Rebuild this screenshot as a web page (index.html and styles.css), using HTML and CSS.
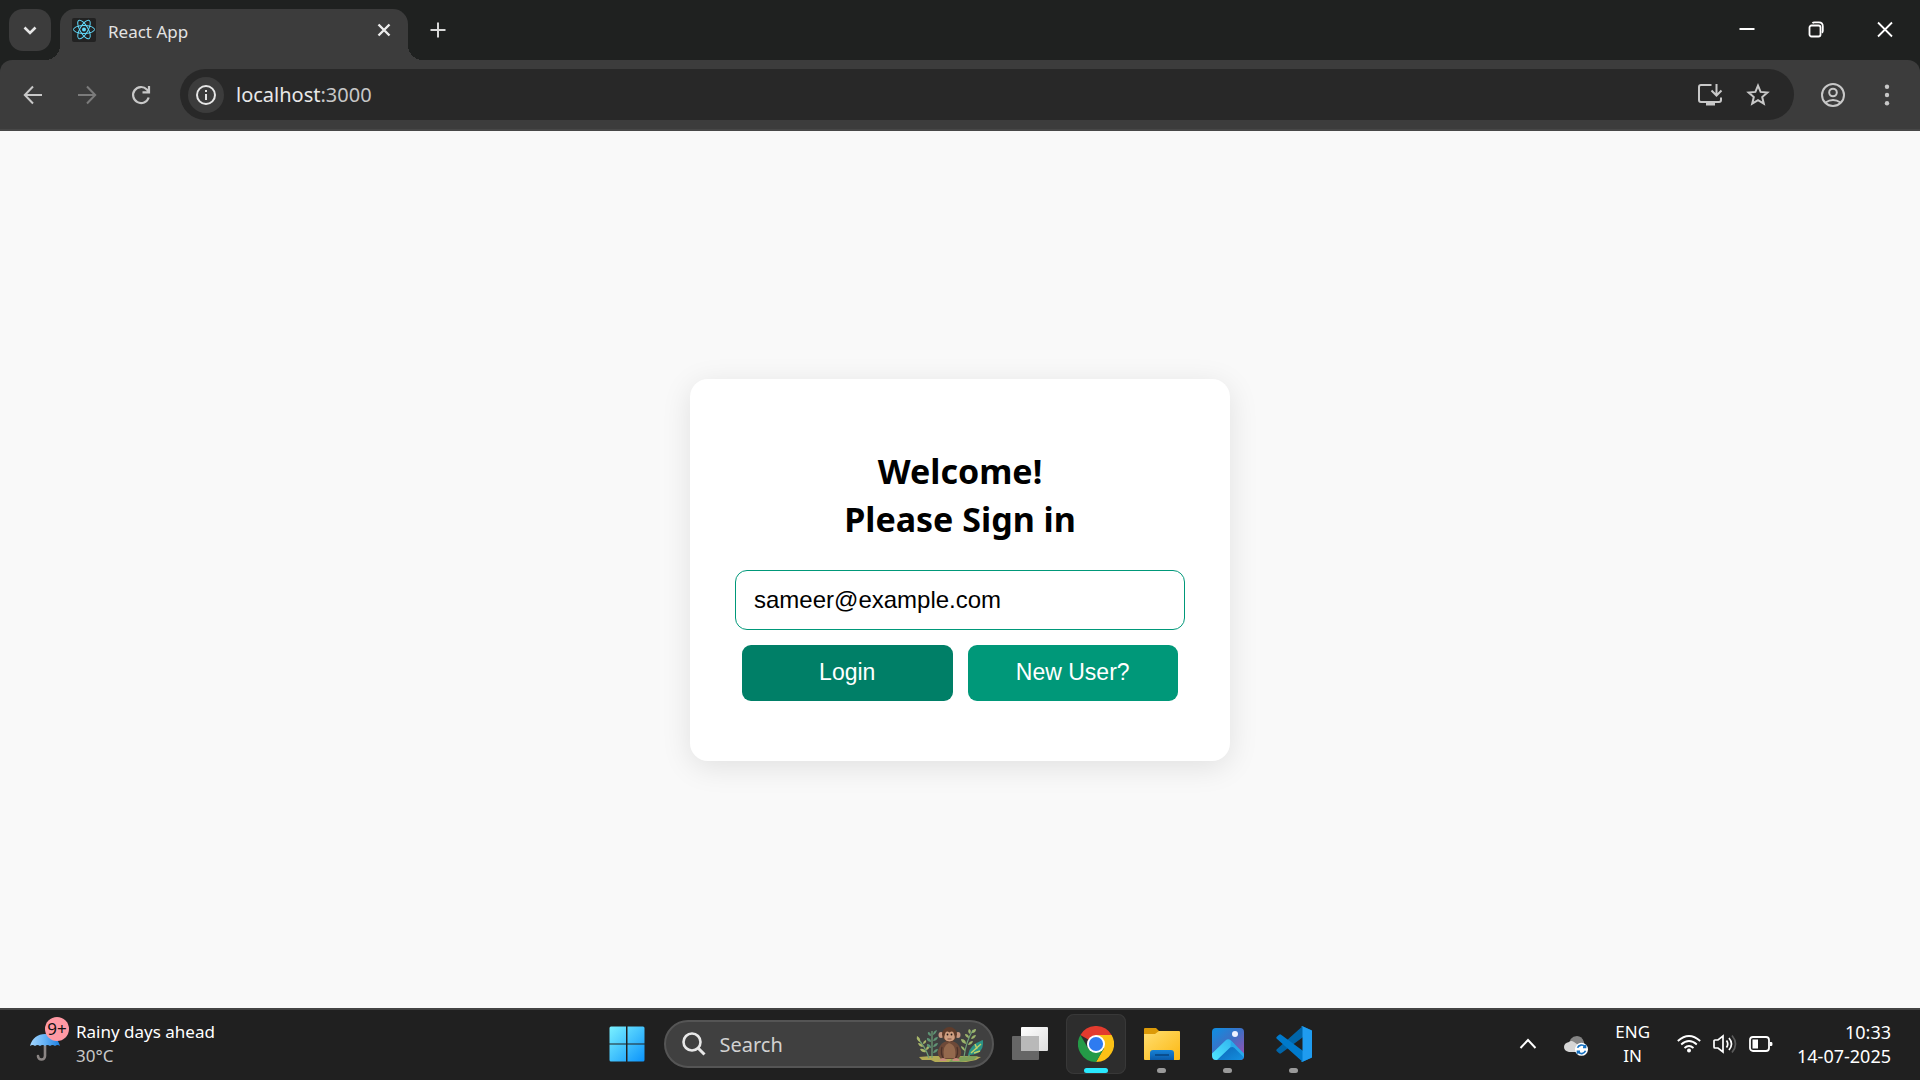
FILE: index.html
```html
<!DOCTYPE html>
<html lang="en">
<head>
<meta charset="utf-8">
<title>React App</title>
<link rel="stylesheet" href="styles.css">
</head>
<body>
<header class="browser">
  <div class="tabstrip">
    <button class="tab-search" aria-label="Search tabs"><svg width="42" height="42" viewBox="0 0 42 42"><path d="M15.500 18.500l5.500 5.500 5.500-5.500" fill="none" stroke="#e6e6e6" stroke-width="2.600"/></svg></button>
    <div class="tab">
      <svg class="favicon" width="24" height="24" viewBox="0 0 24 24"><rect width="24" height="24" rx="2" fill="#222"/><g fill="none" stroke="#61dafb" stroke-width="1"><ellipse cx="12" cy="11.500" rx="10.500" ry="4"/><ellipse cx="12" cy="11.500" rx="10.500" ry="4" transform="rotate(60 12 11.500)"/><ellipse cx="12" cy="11.500" rx="10.500" ry="4" transform="rotate(120 12 11.500)"/></g><circle cx="12" cy="11.500" r="2" fill="#61dafb"/></svg>
      <span class="tab-title">React App</span>
      <button class="icon-button" aria-label="Close tab"><svg width="24" height="24" viewBox="0 0 24 24"><path d="M6.500 6.500l11 11M17.500 6.500l-11 11" stroke="#ececec" stroke-width="2.400"/></svg></button>
    </div>
    <button class="new-tab" aria-label="New tab"><svg width="24" height="24" viewBox="0 0 24 24"><path d="M12 4.500v15M4.500 12h15" stroke="#d8d8d8" stroke-width="2"/></svg></button>
    <div class="window-controls">
      <button class="window-button" aria-label="Minimize"><svg width="24" height="24" viewBox="0 0 24 24"><path d="M4.500 11h15" stroke="#fff" stroke-width="2"/></svg></button>
      <button class="window-button" aria-label="Restore"><svg width="24" height="24" viewBox="0 0 24 24" fill="none" stroke="#fff" stroke-width="1.800"><rect x="5.500" y="7.500" width="11" height="11" rx="2"/><path d="M8.500 5.300q.6-.9 2-.9H15q3.800 0 3.800 3.800v4.600q0 1.200-.9 1.900"/></svg></button>
      <button class="window-button" aria-label="Close"><svg width="24" height="24" viewBox="0 0 24 24"><path d="M5 4.500l14 14M19 4.500l-14 14" stroke="#fff" stroke-width="1.800"/></svg></button>
    </div>
  </div>
  <div class="toolbar">
    <nav class="nav-buttons">
      <button class="icon-button" aria-label="Back"><svg width="24" height="24" viewBox="0 0 24 24" fill="none" stroke="#c8c8c8" stroke-width="2"><path d="M21 12H4.500M12 3.500L3.800 12l8.200 8.500"/></svg></button>
      <button class="icon-button" aria-label="Forward"><svg width="24" height="24" viewBox="0 0 24 24" fill="none" stroke="#7b7b7b" stroke-width="2"><path d="M3 12h16.500M12 3.500l8.200 8.500-8.200 8.500"/></svg></button>
      <button class="icon-button" aria-label="Reload"><svg width="24" height="24" viewBox="0 0 24 24" fill="none" stroke="#c8c8c8" stroke-width="2.200"><path d="M19.700 14.500A8 8 0 1 1 17.800 6.400L20 8.600M20 3v6.300h-6.500"/></svg></button>
    </nav>
    <div class="omnibox">
      <button class="site-info" aria-label="Site information"><svg width="24" height="24" viewBox="0 0 24 24"><circle cx="12" cy="12" r="9" fill="none" stroke="#e6e6e6" stroke-width="2"/><path d="M12 11v6M12 7v2" stroke="#e6e6e6" stroke-width="2"/></svg></button>
      <a class="url" href="#">localhost<span class="port">:3000</span></a>
      <button class="icon-button" aria-label="Install app"><svg width="28" height="28" viewBox="0 0 28 28" fill="none" stroke="#c8c8c8" stroke-width="2"><path d="M15.500 4H5Q3 4 3 6v13q0 2 2 2h18q2 0 2-2v-2.500M20.500 3v11M15.500 9.500l5 5 5-5"/><path d="M10 21h9v3.500h-9z" fill="#c8c8c8" stroke="none"/></svg></button>
      <button class="icon-button" aria-label="Bookmark"><svg width="28" height="28" viewBox="0 0 28 28"><path d="M14 4.600l2.600 6.300 6.800.6-5.200 4.500 1.600 6.700-5.800-3.600-5.800 3.600 1.600-6.700-5.200-4.500 6.800-.6z" fill="none" stroke="#c8c8c8" stroke-width="2"/></svg></button>
    </div>
    <button class="icon-button" aria-label="Profile"><svg width="28" height="28" viewBox="0 0 28 28" fill="none" stroke="#c8c8c8" stroke-width="2"><circle cx="14" cy="14" r="11"/><circle cx="14" cy="11.500" r="3.800"/><path d="M6.500 21.500q7.500-5 15 0"/></svg></button>
    <button class="icon-button" aria-label="Menu"><svg width="28" height="28" viewBox="0 0 28 28" fill="#c8c8c8"><circle cx="14" cy="5.700" r="2.200"/><circle cx="14" cy="14" r="2.200"/><circle cx="14" cy="22.300" r="2.200"/></svg></button>
  </div>
</header>
<main class="page">
  <form class="card">
    <h1 class="title">Welcome!<br>Please Sign in</h1>
    <input class="email" type="email" aria-label="Email" value="sameer@example.com">
    <div class="actions">
      <button class="action action-active" type="button">Login</button>
      <button class="action" type="button">New User?</button>
    </div>
  </form>
</main>
<footer class="taskbar">
  <button class="weather">
    <span class="weather-icon">
      <svg width="32" height="32" viewBox="0 0 32 32"><defs><linearGradient id="umb" x1="0" x2="1"><stop offset="0" stop-color="#a5d8ff"/><stop offset=".5" stop-color="#64b1f5"/><stop offset="1" stop-color="#1c7fe0"/></linearGradient></defs><path d="M16 14v10a3.500 3.500 0 0 1-7 0" fill="none" stroke="#8b8584" stroke-width="2.600" stroke-linecap="round"/><path d="M1 14C3 6 9 2 16 2s13 4 15 12q-2.500-2-5 0-2.500-2-5 0-2.500-2-5 0-2.500-2-5 0-2.500-2-5 0-2.500-2-5 0z" fill="url(#umb)"/></svg>
      <span class="badge">9+</span>
    </span>
    <span class="stack"><span>Rainy days ahead</span><span class="muted">30°C</span></span>
  </button>
  <div class="apps">
    <button class="app" aria-label="Start"><svg width="36" height="36" viewBox="0 0 36 36"><defs><linearGradient id="win" gradientUnits="userSpaceOnUse" x1="0" y1="0" x2="36" y2="36"><stop offset="0" stop-color="#7cf3ff"/><stop offset="1" stop-color="#0a92fb"/></linearGradient></defs><path d="M2 .5h15v17H.500V2Q.500.500 2 .5zM18.500.500H34q1.500 0 1.500 1.500v15.500h-17zM.500 18.500H17v17H2Q.500 35.500.500 34zM18.500 18.500h17V34q0 1.500-1.500 1.500H18.500z" fill="url(#win)"/></svg></button>
    <div class="search">
      <svg width="26" height="26" viewBox="0 0 26 26" fill="none" stroke="#e8e8e8" stroke-width="2.600"><circle cx="11" cy="11" r="8.500"/><path d="M17 17l6.500 6.500" stroke-width="3"/></svg>
      <input class="search-input" type="text" aria-label="Search" placeholder="Search">
      <svg width="70" height="36" viewBox="0 0 70 36">
        <path d="M4 31l12-1h36l14 1-5 3-10 2H20l-4-2H7z" fill="#b3ab55"/><path d="M38 31l25-1-4 4-14 2H34z" fill="#7fa05a"/>
        <g fill="none" stroke="#6fa078" stroke-width="1.200"><path d="M14 32Q10 20 2 12M17 32V5M49 31Q51 15 58 4M53 31q5-8 14-16"/></g>
        <g fill="#a9b76a"><path d="M2 10q4 2 3 6-4-2-3-6zM3 17q4 0 5 4-4 0-5-4zM5 23q4-1 6 3-4 1-6-3zM8 18q0-3 3-4 1 3-3 4zM11 24q0-4 3-4 1 3-3 4z"/></g>
        <g fill="#5f9475"><path d="M16 10q-4-1-3-4 3 0 3 4zM18 9q0-4 4-5-1 4-4 5zM16 16q-5-1-4-4 4 0 4 4zM18 15q1-4 5-4-1 4-5 4zM16 22q-5-1-4-4 4 0 4 4zM18 21q1-4 5-4-1 4-5 4zM18 27q1-4 5-4-1 4-5 4z"/></g>
        <g fill="#9bb46c"><path d="M55 8q-3-2-1-5 3 1 1 5zM57 7q0-4 4-4 0 4-4 4zM54 12q-4-1-4-4 4 0 4 4zM56 13q1-4 5-4-1 4-5 4zM51 18q-5-1-5-5 5 0 5 5zM53 19q1-4 5-4-1 4-5 4zM50 25q-4-2-4-5 4 1 4 5z"/></g>
        <path d="M53 29q1-10 15-15 1 9-5 13-4 2-10 2z" fill="#2b9386"/><path d="M56 27l10-9M59 27l6-2M60 18l2 5" stroke="#c1cf68" stroke-width="1.500"/>
        <path d="M26 33q-6-5-1-13 3-5 9.500-5t9.500 5q5 8-1 13z" fill="#6d4938"/><path d="M29 32q-2-13 5-15 8 2 6 15z" fill="#94694d"/><path d="M27 21q-2 7 2 12M42 21q2 7-2 12" fill="none" stroke="#4b3128" stroke-width="1.200"/>
        <ellipse cx="26" cy="9" rx="2.500" ry="3" fill="#c79780"/><ellipse cx="43" cy="9" rx="2.500" ry="3" fill="#c79780"/>
        <ellipse cx="34.500" cy="8.500" rx="7.500" ry="7.500" fill="#5f3c2b"/><path d="M30 8q1-4 4.500-1.500Q38 4 39 8q3 7-4.500 7.500Q27 15 30 8z" fill="#cf9e80"/>
        <circle cx="32.500" cy="8.500" r=".9" fill="#241b18"/><circle cx="36.500" cy="8.500" r=".9" fill="#241b18"/><path d="M32.500 13h4" stroke="#7b4d40"/>
        <path d="M24 34q4-4 8 0l-1 1h-6zM37 34q4-4 8 0l-1 1h-6z" fill="#c98d7c"/>
      </svg>
    </div>
    <button class="app" aria-label="Task view"><svg width="36" height="36" viewBox="0 0 36 36"><defs><linearGradient id="tv" x2="1" y2="1"><stop stop-color="#fff"/><stop offset="1" stop-color="#ddd"/></linearGradient></defs><rect y="10" width="27" height="24" rx="1" fill="#666"/><rect x="9" y="1" width="27" height="24" rx="1" fill="url(#tv)"/><rect x="9" y="10" width="18" height="15" fill="#b9b9b9"/></svg></button>
    <button class="app app-current" aria-label="Chrome"><svg width="36" height="36" viewBox="0 0 36 36"><path d="M18 18L2.400 9A18 18 0 0 1 33.600 9z" fill="#e33b2e"/><path d="M18 9h15.600A18 18 0 0 1 18 36l7.800-13.500z" fill="#fbc116"/><path d="M10.200 22.500L2.400 9A18 18 0 0 0 18 36l7.800-13.500z" fill="#249a47"/><circle cx="18" cy="18" r="9" fill="#fff"/><circle cx="18" cy="18" r="7.100" fill="#2e7bf0"/></svg></button>
    <button class="app app-open" aria-label="File Explorer"><svg width="36" height="36" viewBox="0 0 36 36"><defs><linearGradient id="fold" x2="1" y2="1"><stop stop-color="#ffde70"/><stop offset="1" stop-color="#fcb812"/></linearGradient><linearGradient id="fb" x2="0" y2="1"><stop stop-color="#1683d8"/><stop offset="1" stop-color="#0b5aa8"/></linearGradient></defs><path d="M0 3q0-1 1-1h11l4 4-4 3H0z" fill="#dc9a08"/><path d="M0 8h11l4-3h20q1 0 1 1v27q0 1-1 1H1q-1 0-1-1z" fill="url(#fold)"/><path d="M6 34v-7q0-3 3-3h18q3 0 3 3v7z" fill="url(#fb)"/><path d="M11 29h14" stroke="#07437e" stroke-width="1.500"/></svg></button>
    <button class="app app-open" aria-label="Photos"><svg width="36" height="36" viewBox="0 0 36 36"><defs><linearGradient id="ph" x1=".2" y1="0" x2=".9" y2=".8"><stop stop-color="#158ade"/><stop offset=".5" stop-color="#3f6fc4"/><stop offset="1" stop-color="#8a55b5"/></linearGradient><linearGradient id="mt" x1="0" y1="1" x2="1" y2="0"><stop stop-color="#50e6ff"/><stop offset="1" stop-color="#2fb2ee"/></linearGradient><linearGradient id="mr" x1="0" y1="0" x2="1" y2="1"><stop stop-color="#0b5fb0"/><stop offset="1" stop-color="#1490e0"/></linearGradient></defs><rect x="2" y="2" width="32" height="32" rx="4" fill="url(#ph)"/><path d="M5 33l17-16 12 12v1q0 4-4 4H6z" fill="url(#mr)"/><path d="M3.200 33Q2 31.500 2 29v-1.500L15.500 14.500q2.700-2.300 5.400 0l3.800 4-2.200.7L7 34H6q-1.500 0-2.800-1z" fill="url(#mt)"/><path d="M20.900 14.500l13.100 13v4L24.500 22q-2-1.500-4-.5z" fill="#28a8ea"/><circle cx="25" cy="8" r="3" fill="#eef2ff"/></svg></button>
    <button class="app app-open" aria-label="Visual Studio Code"><svg width="36" height="36" viewBox="0 0 36 36"><path d="M26.500.200L.800 23.300q-1 1 0 2l2.300 2q.9.800 2 0L36 4.500z" fill="#0065a9"/><path d="M26.500 35.800L.800 12.700q-1-1 0-2l2.300-2q.9-.8 2 0L36 31.500z" fill="#007acc"/><path d="M26.500.200L36 4.500v27l-9.500 4.300q-1 .4-1.700-.4 1.700.7 1.700-1.200V1.800q0-1.900-1.700-1.200.7-.8 1.700-.4z" fill="#1f9cf0"/></svg></button>
  </div>
  <div class="tray">
    <button class="tray-button" aria-label="Show hidden icons"><svg width="24" height="24" viewBox="0 0 24 24"><path d="M4.500 16l7.500-8 7.500 8" fill="none" stroke="#fff" stroke-width="2"/></svg></button>
    <button class="tray-button" aria-label="OneDrive"><svg width="24" height="24" viewBox="0 0 24 24"><path d="M5 15Q5 4 13 4q5 0 7 6v5z" fill="#858585"/><path d="M5 20q-5-1-5-5t5-5q2-2 5 0l7 5v5z" fill="#d6d6d6"/><circle cx="17.500" cy="17.300" r="6.500" fill="#fff"/><g fill="none" stroke="#1570bf" stroke-width="1.700"><path d="M13.500 15.800a4.300 4.300 0 0 1 7.500-1M21.500 18.800a4.300 4.300 0 0 1-7.500 1M21.500 12.800v2.500h-2.500M13.500 21.800v-2.500H16"/></g></svg></button>
    <button class="stack language"><span>ENG</span><span>IN</span></button>
    <button class="status" aria-label="Network, volume and battery">
      <svg width="24" height="24" viewBox="0 0 24 24" fill="none" stroke="#fff" stroke-width="1.800"><path d="M.8 9q11.200-10 22.400 0M4.200 12.500q7.800-7 15.600 0M7.500 16q4.500-4 9 0"/><circle cx="12" cy="18.500" r="2" fill="#fff" stroke="none"/></svg>
      <svg width="24" height="24" viewBox="0 0 24 24" fill="none" stroke="#fff" stroke-width="1.700"><path d="M1 9v6q0 1 1 1h3l5 4V4L5 8H2q-1 0-1 1zM13.500 8.500q2.500 3.500 0 7M16 6q5 6 0 12"/><path d="M19 3.500q7 8.500 0 17" stroke="#5b5b5b"/></svg>
      <svg width="24" height="24" viewBox="0 0 24 24" fill="none" stroke="#fff" stroke-width="1.800"><rect x="1" y="5" width="19" height="14" rx="3"/><path d="M3.500 7.500h5.500v9H3.500z" fill="#fff" stroke="none"/><path d="M21 10h1.500q1 0 1 2t-1 2H21z" fill="#fff" stroke="none"/></svg>
    </button>
    <button class="stack clock"><span>10:33</span><span>14-07-2025</span></button>
  </div>
</footer>
</body>
</html>
```
FILE: styles.css
```css
* { box-sizing: border-box; }
body {
  margin: 0;
  min-height: 100vh;
  display: flex;
  flex-direction: column;
  font-family: "Noto Sans", "Open Sans", sans-serif;
  background: #f9f9f9;
}
button {
  margin: 0;
  padding: 0;
  border: 0;
  background: none;
  color: inherit;
  font: inherit;
}
svg { display: block; flex: none; }

.browser { background: #1f2120; }
.tabstrip {
  display: flex;
  align-items: flex-start;
  height: 60px;
  padding: 9px 1px 0 9px;
}
.tab-search { border-radius: 14px; background: #3c3c3c; }
.tab {
  position: relative;
  display: flex;
  align-items: center;
  gap: 12px;
  width: 348px;
  height: 51px;
  margin-left: 9px;
  padding: 0 12px 9px;
  border-radius: 15px 15px 0 0;
  background: #3c3c3c;
  color: #e3e3e3;
  font-size: 17px;
  line-height: 24px;
}
.tab::before,
.tab::after {
  content: "";
  position: absolute;
  bottom: 0;
  width: 15px;
  height: 15px;
}
.tab::before {
  right: 100%;
  background: radial-gradient(circle at 0 0, transparent 15px, #3c3c3c 15px);
}
.tab::after {
  left: 100%;
  background: radial-gradient(circle at 100% 0, transparent 15px, #3c3c3c 15px);
}
.tab-title { flex: 1; padding-top: 3px; }
.new-tab { margin: 9px 0 0 18px; }
.window-controls { display: flex; margin-left: auto; }
.window-button {
  display: flex;
  justify-content: center;
  width: 69px;
  padding-top: 9px;
}
.toolbar {
  display: flex;
  align-items: center;
  height: 71px;
  padding: 0 19px 0 21px;
  border-bottom: 2px solid #474747;
  border-radius: 12px 12px 0 0;
  background: #3c3c3c;
}
.nav-buttons { display: flex; gap: 30px; margin-right: 27px; }
.omnibox {
  flex: 1;
  display: flex;
  align-items: center;
  gap: 20px;
  height: 51px;
  margin-right: 25px;
  padding: 0 22px 0 8px;
  border-radius: 26px;
  background: #282828;
}
.omnibox + .icon-button { margin-right: 26px; }
.site-info {
  display: flex;
  align-items: center;
  justify-content: center;
  width: 36px;
  height: 36px;
  margin-right: -8px;
  border-radius: 50%;
  background: #3c3c3c;
}
.url {
  flex: 1;
  color: #e8e8e8;
  font-size: 20px;
  line-height: 28px;
  text-decoration: none;
}
.port { color: #c7c7c7; }

.page {
  flex: 1;
  display: flex;
  align-items: center;
  justify-content: center;
}
.card {
  width: 540px;
  padding: 68px 45px 60px;
  border-radius: 18px;
  background: #fff;
  box-shadow: 0 6px 30px rgba(0, 0, 0, 0.1);
}
.title {
  margin: 0 0 27px;
  font-size: 34px;
  line-height: 48px;
  text-align: center;
}
.email {
  display: block;
  width: 100%;
  height: 60px;
  padding: 0 18px;
  border: 1px solid #009879;
  border-radius: 12px;
  background: #fff;
  color: #000;
  font: 24px "Liberation Sans", sans-serif;
}
.actions { display: flex; gap: 15px; padding: 15px 7px 0; }
.action {
  flex: 1;
  height: 56px;
  border-radius: 9px;
  background: #009879;
  color: #fff;
  font: 23px "Liberation Sans", sans-serif;
}
.action-active { background: #007f67; }

.taskbar {
  display: grid;
  grid-template-columns: 1fr auto 1fr;
  align-items: center;
  height: 72px;
  padding-bottom: 2px;
  border-top: 2px solid #444;
  background: #202020;
  color: #fff;
  font-size: 17px;
  line-height: 24px;
}
.stack { display: flex; flex-direction: column; }
.weather {
  display: flex;
  justify-self: start;
  gap: 15px;
  padding-left: 29px;
  text-align: left;
}
.weather-icon { position: relative; padding-top: 12px; }
.badge {
  position: absolute;
  top: -3px;
  left: 16px;
  width: 24px;
  height: 24px;
  border-radius: 50%;
  background: #ff99a4;
  color: #111;
  text-align: center;
}
.muted { color: #c8c8c8; }
.apps { display: flex; align-items: center; gap: 6px; }
.app {
  position: relative;
  display: flex;
  align-items: center;
  justify-content: center;
  width: 60px;
  height: 60px;
  border-radius: 8px;
}
.app-current { background: #2d2d2d; box-shadow: inset 0 0 0 1px #383838; }
.app-open::after,
.app-current::after {
  content: "";
  position: absolute;
  bottom: 1px;
  width: 9px;
  height: 5px;
  border-radius: 3px;
  background: #9a9a9a;
}
.app-current::after { width: 24px; background: #29e9ff; }
.search {
  display: flex;
  align-items: center;
  width: 330px;
  height: 48px;
  margin-left: 1px;
  padding: 0 7px 0 15px;
  border: 2px solid #555;
  border-radius: 24px;
  background: #404040;
}
.search-input {
  flex: 1;
  min-width: 0;
  padding: 0 0 0 13px;
  border: 0;
  background: none;
  color: #fff;
  font: 20px "Noto Sans", sans-serif;
}
.search-input::placeholder { color: #d2d2d2; }
.tray {
  display: flex;
  align-items: center;
  justify-self: end;
  padding-right: 29px;
}
.tray-button { margin-right: 24px; }
.language { align-items: center; margin: 0 27px 0 3px; }
.status { display: flex; gap: 12px; margin-right: 24px; }
.clock { align-items: flex-end; font-size: 18px; }
```
